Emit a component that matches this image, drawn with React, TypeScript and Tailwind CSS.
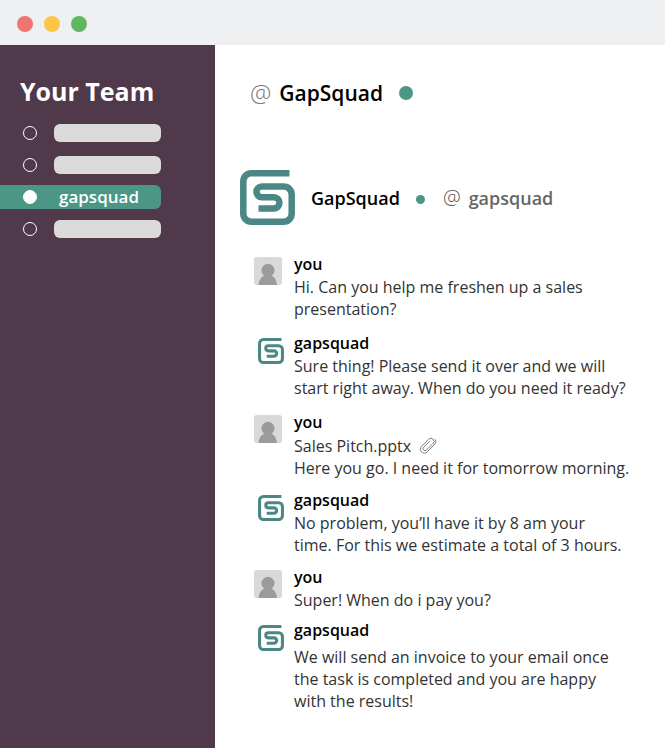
import React from 'react';
import clsx from 'clsx';

type Message = {
  from: 'you' | 'gapsquad';
  lines: string[];
  attachment?: string;
  rowClass?: string;
  bodyClass?: string;
};

const messages: Message[] = [
  {
    from: 'you',
    lines: ['Hi. Can you help me freshen up a sales', 'presentation?'],
  },
  {
    from: 'gapsquad',
    lines: ['Sure thing! Please send it over and we will', 'start right away. When do you need it ready?'],
    rowClass: 'mt-3',
  },
  {
    from: 'you',
    attachment: 'Sales Pitch.pptx',
    lines: ['Here you go. I need it for tomorrow morning.'],
    rowClass: 'mt-3',
    bodyClass: 'mt-px',
  },
  {
    from: 'gapsquad',
    lines: ['No problem, you’ll have it by 8 am your', 'time. For this we estimate a total of 3 hours.'],
    rowClass: 'mt-2.5',
  },
  {
    from: 'you',
    lines: ['Super! When do i pay you?'],
    rowClass: 'mt-2.5',
  },
  {
    from: 'gapsquad',
    lines: ['We will send an invoice to your email once', 'the task is completed and you are happy', 'with the results!'],
    rowClass: 'mt-2',
    bodyClass: 'mt-1',
  },
];

const channels = ['', '', 'gapsquad', ''];

function Logo({ className }: { className?: string }) {
  return (
    <svg viewBox="0 0 55 55" fill="none" stroke="#4a8785" strokeWidth="6.5" className={className} aria-hidden="true">
      <path d="M49.5 3.3H11.3a8 8 0 0 0-8 8V43.700a8 8 0 0 0 8 8H43.700a8 8 0 0 0 8-8V24.500a8 8 0 0 0-8-8H21.800a5.300 5.300 0 0 0 0 10.700H33.800a5.600 5.600 0 0 1 0 11.300H18.500" />
    </svg>
  );
}

function UserAvatar() {
  return (
    <svg viewBox="0 0 28 28" className="h-7 w-7" aria-hidden="true">
      <rect width="28" height="28" rx="2.5" fill="#d9d9d9" />
      <path
        d="M14 6.800a6.500 6.500 0 0 0-6.500 6.500c0 2.500 1.300 4.400 2.800 5.500C7 20 5 23.500 4.600 28h18.400c-.4-4.500-2.400-8-5.500-9.200 1.600-1.100 3-3 3-5.500A6.500 6.500 0 0 0 14 6.800Z"
        fill="#9b9b9a"
      />
    </svg>
  );
}

function Clip() {
  return (
    <svg viewBox="0 0 18 18" fill="none" stroke="#808080" strokeWidth="1" strokeLinecap="round" className="h-[18px] w-[18px]" aria-hidden="true">
      <path d="M14.500 8.500 8.200 14.900a3.900 3.900 0 0 1-5.700 0 3.900 3.900 0 0 1 0-5.500L9.700 2.200a3 3 0 0 1 4.400 0 3 3 0 0 1 0 4.200L7.500 13a2 2 0 0 1-2.900 0 2 2 0 0 1 0-2.700L10.600 4.400" />
      <path d="m14.500 8.500 1.600-1.700a3.400 3.400 0 0 0 .2-4.200" />
    </svg>
  );
}

function Sidebar() {
  return (
    <aside className="w-[215px] shrink-0 bg-[#4f394b] pt-[30px]">
      <h1 className="pl-5 text-[25px] leading-8 font-bold text-white">Your Team</h1>
      <ul className="mt-3.5 flex flex-col gap-2">
        {channels.map((name, index) => (
          <li
            key={index}
            className={clsx('flex h-6 w-[161px] items-center rounded-r-md pl-[23px]', name && 'bg-[#4c9686]')}
          >
            <span className={clsx('h-3.5 w-3.5 shrink-0 rounded-full border border-white', name && 'bg-white')} />
            {name ? (
              <a href="#gapsquad" className="pl-[22px] text-[17px] leading-6 font-semibold text-white">
                {name}
              </a>
            ) : (
              <span className="ml-[17px] h-[18px] grow rounded-md bg-[#dadada]" />
            )}
          </li>
        ))}
      </ul>
    </aside>
  );
}

function MessageRow({ message }: { message: Message }) {
  return (
    <li className={clsx('flex', message.rowClass)}>
      <div className="flex w-10 shrink-0 pt-1">
        {message.from === 'you' ? <UserAvatar /> : <Logo className="mt-0.5 ml-1 h-[26px] w-[26px]" />}
      </div>
      <div>
        <p className="text-base leading-[23px] font-semibold text-black">{message.from}</p>
        <div className={clsx('text-base leading-[22px] text-[#333]', message.bodyClass)}>
          {message.attachment && (
            <p className="flex items-center gap-2">
              {message.attachment}
              <Clip />
            </p>
          )}
          {message.lines.map((line) => (
            <p key={line}>{line}</p>
          ))}
        </div>
      </div>
    </li>
  );
}

export default function App() {
  return (
    <div className="flex min-h-screen flex-col bg-white font-['Open_Sans',sans-serif]">
      <div className="flex h-[45px] items-center gap-[11px] bg-[#eef0f2] pt-0.5 pl-[17px]">
        <span className="h-4 w-4 rounded-full bg-[#f1756f]" />
        <span className="h-4 w-4 rounded-full bg-[#fbc648]" />
        <span className="h-4 w-4 rounded-full bg-[#5fb75f]" />
      </div>
      <div className="flex grow">
        <Sidebar />
        <main className="grow pl-[25px]">
          <header className="flex items-center gap-2 pt-8 pl-2.5 text-[21px] leading-8">
            <span className="text-2xl font-light text-[#777]">@</span>
            <h2 className="font-semibold text-black">GapSquad</h2>
            <span className="ml-2 h-3.5 w-3.5 rounded-full bg-[#4c9686]" />
          </header>
          <section className="mt-[61px] flex items-center text-lg leading-7">
            <Logo className="h-[55px] w-[55px]" />
            <h3 className="ml-4 font-semibold text-black">GapSquad</h3>
            <span className="mt-1 ml-4 h-[9px] w-[9px] rounded-full bg-[#4c9686]" />
            <span className="ml-[18px] text-xl font-light text-[#555]">@</span>
            <span className="ml-2 font-semibold text-[#666]">gapsquad</span>
          </section>
          <ul className="mt-7 pl-3.5">
            {messages.map((message, index) => (
              <MessageRow key={index} message={message} />
            ))}
          </ul>
        </main>
      </div>
    </div>
  );
}
